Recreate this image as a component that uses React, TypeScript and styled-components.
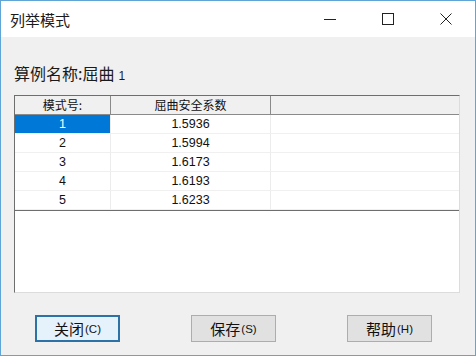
import React from "react";
import styled, { createGlobalStyle } from "styled-components";

const GlobalStyle = createGlobalStyle`
  html, body {
    margin: 0;
    padding: 0;
    background: #f0f0f0;
  }
  * {
    box-sizing: border-box;
  }
`;

const FONT = `"Liberation Sans", "Noto Sans CJK SC", sans-serif`;

const Window = styled.div`
  width: 476px;
  height: 356px;
  border: 1px solid #5fa6d6;
  background: #f0f0f0;
  display: flex;
  flex-direction: column;
  font-family: ${FONT};
  color: #000;
`;

const TitleBar = styled.div`
  height: 36px;
  background: #fff;
  display: flex;
  align-items: center;
  justify-content: space-between;
  padding-left: 9px;
`;

const Title = styled.span`
  font-size: 15px;
  font-family: "Noto Sans CJK SC", sans-serif;
  color: #1a1a1a;
`;

const Controls = styled.div`
  display: flex;
  height: 100%;
`;

const CtrlBtn = styled.div`
  width: 58px;
  height: 100%;
  display: flex;
  align-items: center;
  justify-content: center;
`;

const Body = styled.div`
  flex: 1;
  display: flex;
  flex-direction: column;
  padding: 26px 13px 0 13px;
`;

const Caption = styled.div`
  font-family: "Noto Sans CJK SC", sans-serif;
  font-size: 16px;
  line-height: 20px;
  height: 20px;
  color: #1a1a1a;
  display: flex;
  align-items: baseline;
  span {
    font-family: ${FONT};
    font-size: 12px;
    margin-left: 4px;
  }
`;

const ListBox = styled.div`
  margin-top: 12px;
  width: 446px;
  height: 198px;
  background: #fff;
  border-top: 1px solid #6e6e6e;
  border-left: 1px solid #6e6e6e;
  border-right: 1px solid #dcdcdc;
  border-bottom: 1px solid #dcdcdc;
  display: flex;
  flex-direction: column;
`;

const Grid = styled.div`
  display: grid;
  grid-template-columns: 96px 160px 1fr;
  border-bottom: 1px solid #6e6e6e;
`;

const HeadCell = styled.div<{ $last?: boolean }>`
  height: 19px;
  background: #f0f0f0;
  border-bottom: 1px solid #8a8a8a;
  border-right: ${({ $last }) => ($last ? "none" : "1px solid #8a8a8a")};
  font-family: "Noto Sans CJK SC", sans-serif;
  font-size: 12px;
  line-height: 18px;
  text-align: center;
  color: #111;
`;

const Cell = styled.div<{ $selected?: boolean; $last?: boolean }>`
  height: 19px;
  border-bottom: 1px solid #f0f0f0;
  border-right: ${({ $last }) => ($last ? "none" : "1px solid #ececec")};
  background: ${({ $selected }) => ($selected ? "#0078d7" : "#fff")};
  color: ${({ $selected }) => ($selected ? "#fff" : "#111")};
  font-size: 12.5px;
  line-height: 18px;
  text-align: center;
`;

const Footer = styled.div`
  display: flex;
  gap: 71px;
  padding-left: 21px;
  margin-top: 22px;
`;

const Button = styled.button<{ $focused?: boolean }>`
  width: 85px;
  height: 27px;
  padding: 0;
  background: ${({ $focused }) => ($focused ? "#e5f1fb" : "#e1e1e1")};
  border: ${({ $focused }) => ($focused ? "2px solid #2d72a6" : "1px solid #adadad")};
  font-family: "Noto Sans CJK SC", sans-serif;
  font-size: 15px;
  color: #111;
  display: flex;
  align-items: center;
  justify-content: center;
  span {
    font-family: ${FONT};
    font-size: 11.5px;
    margin-left: 1px;
  }
`;

const rows = [
  ["1", "1.5936"],
  ["2", "1.5994"],
  ["3", "1.6173"],
  ["4", "1.6193"],
  ["5", "1.6233"],
];

const App = () => {
  return (
    <>
      <GlobalStyle />
      <Window>
        <TitleBar>
          <Title>列举模式</Title>
          <Controls>
            <CtrlBtn>
              <svg width="12" height="12" viewBox="0 0 12 12">
                <line x1="0" y1="6.5" x2="12" y2="6.5" stroke="#222" strokeWidth="1" />
              </svg>
            </CtrlBtn>
            <CtrlBtn>
              <svg width="12" height="12" viewBox="0 0 12 12">
                <rect x="0.5" y="0.5" width="11" height="11" fill="none" stroke="#222" strokeWidth="1" />
              </svg>
            </CtrlBtn>
            <CtrlBtn>
              <svg width="12" height="12" viewBox="0 0 12 12">
                <path d="M0.5 0.5 L11.5 11.5 M11.5 0.5 L0.5 11.5" stroke="#222" strokeWidth="1" />
              </svg>
            </CtrlBtn>
          </Controls>
        </TitleBar>
        <Body>
          <Caption>
            算例名称:屈曲<span>1</span>
          </Caption>
          <ListBox>
            <Grid>
              <HeadCell>模式号:</HeadCell>
              <HeadCell>屈曲安全系数</HeadCell>
              <HeadCell $last />
              {rows.map(([n, v], i) => (
                <React.Fragment key={n}>
                  <Cell $selected={i === 0}>{n}</Cell>
                  <Cell>{v}</Cell>
                  <Cell $last />
                </React.Fragment>
              ))}
            </Grid>
          </ListBox>
          <Footer>
            <Button $focused>
              关闭<span>(C)</span>
            </Button>
            <Button>
              保存<span>(S)</span>
            </Button>
            <Button>
              帮助<span>(H)</span>
            </Button>
          </Footer>
        </Body>
      </Window>
    </>
  );
};

export default App;
